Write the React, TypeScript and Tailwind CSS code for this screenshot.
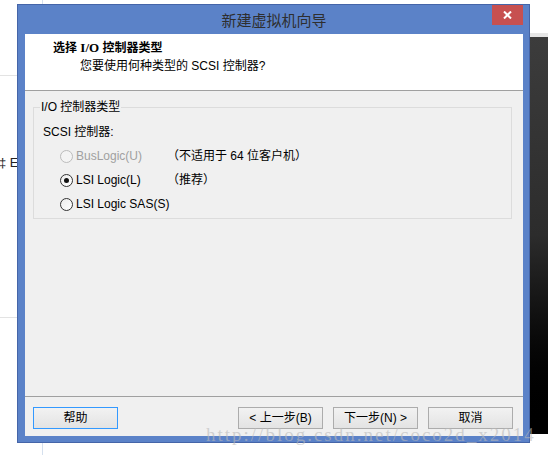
export default function App() {
  const radioRows = [
    { label: "BusLogic(U)", note: "（不适用于 64 位客户机）", disabled: true, checked: false },
    { label: "LSI Logic(L)", note: "（推荐）", disabled: false, checked: true },
    { label: "LSI Logic SAS(S)", note: "", disabled: false, checked: false },
  ];
  const btn =
    "flex h-[22px] w-[85px] items-center justify-center border bg-gradient-to-b from-[#f2f2f2] to-[#e3e3e3] leading-[16px]";
  return (
    <div className="relative h-[455px] w-[548px] overflow-hidden bg-white font-['Liberation_Sans','Noto_Sans_CJK_SC',sans-serif] text-[12px] text-black">
      {/* desktop behind the window */}
      <div className="absolute left-[42px] top-0 h-full w-px bg-[#d5e0ee]" />
      <div className="absolute left-0 top-[75px] h-px w-[20px] bg-[#e3e3e3]" />
      <div className="absolute left-0 top-[317px] h-px w-[20px] bg-[#e3e3e3]" />
      <div className="absolute left-[-1px] top-[154px] text-[13px] leading-[18px] text-[#222]">‡ E</div>
      <div className="absolute left-[530px] top-[33px] h-[4px] w-[18px] bg-[#e6e6e6]" />
      <div className="absolute left-[530px] top-[37px] h-[397px] w-[18px] bg-gradient-to-b from-[#3c3c3c] via-[#2c2c2c] to-[#000]" />

      {/* window */}
      <div className="relative ml-[17px] mt-[4px] flex h-[439px] w-[513px] flex-col border border-[#4565a8] bg-[#5b82c8] pb-[6px] pl-[7px] pr-[6px]">
        <div className="grid h-[29px] grid-cols-[31px_1fr_31px]">
          <div />
          <div className="text-center font-['Noto_Sans_CJK_SC',sans-serif] text-[15px] leading-[30px] text-[#2e2e2e]">
            新建虚拟机向导
          </div>
          <div className="flex h-[20px] items-center justify-center bg-[#c75050]">
            <svg width="9" height="8" viewBox="0 0 9 8">
              <path d="M1 0.5 L8 7.5 M8 0.5 L1 7.5" stroke="white" strokeWidth="2" />
            </svg>
          </div>
        </div>

        <div className="flex flex-1 flex-col bg-[#f0f0f0]">
          {/* header */}
          <div className="h-[57px] border-b border-[#a0a0a0] bg-white pt-[5px]">
            <div className="pl-[28px] text-[12px] font-bold leading-[18px]">
              选择 <span className="font-['Liberation_Serif',serif] text-[13px]">I/O</span> 控制器类型
            </div>
            <div className="pl-[55px] leading-[18px]">您要使用何种类型的 SCSI 控制器?</div>
          </div>

          {/* body */}
          <div className="flex-1 pl-[8px] pr-[11px] pt-[8px]">
            <fieldset className="border border-[#dcdcdc] px-[6px] pb-[2px]">
              <legend className="px-[1px] leading-[16px]">I/O 控制器类型</legend>
              <div className="mt-[8px] pl-[3px] leading-[18px]">SCSI 控制器:</div>
              <div className="mt-[3px] flex flex-col">
                {radioRows.map((r) => (
                  <div key={r.label} className="flex h-[24px] items-center whitespace-nowrap pl-[20px]">
                    <div
                      className={
                        r.disabled
                          ? "flex h-[13px] w-[13px] shrink-0 items-center justify-center rounded-full border border-[#bcbcbc] bg-[#f4f4f4]"
                          : "flex h-[13px] w-[13px] shrink-0 items-center justify-center rounded-full border border-[#333333] bg-gradient-to-br from-[#ececec] to-white"
                      }
                    >
                      {r.checked && <div className="h-[5px] w-[5px] rounded-full bg-[#111]" />}
                    </div>
                    <div className={r.disabled ? "ml-[3px] min-w-[91px] text-[#a0a0a0]" : "ml-[3px] min-w-[91px]"}>
                      {r.label}
                    </div>
                    {r.note && <div>{r.note}</div>}
                  </div>
                ))}
              </div>
            </fieldset>
          </div>

          {/* footer */}
          <div className="flex h-[40px] items-start border-t border-[#a0a0a0] pl-[8px] pr-[10px] pt-[10px]">
            <button className={btn + " border-[#3399ff]"}>帮助</button>
            <div className="ml-auto flex gap-[10px]">
              <button className={btn + " border-[#acacac]"}>&lt; 上一步(B)</button>
              <button className={btn + " border-[#acacac]"}>下一步(N) &gt;</button>
              <button className={btn + " border-[#acacac]"}>取消</button>
            </div>
          </div>
        </div>
      </div>

      {/* watermark */}
      <div className="pointer-events-none absolute left-[206px] top-[428px] whitespace-nowrap font-['Liberation_Serif',serif] text-[19px] leading-[13px] tracking-[2px] text-[rgba(185,185,185,0.6)]">
        http://blog.csdn.net/coco2d_x2014
      </div>
    </div>
  );
}
